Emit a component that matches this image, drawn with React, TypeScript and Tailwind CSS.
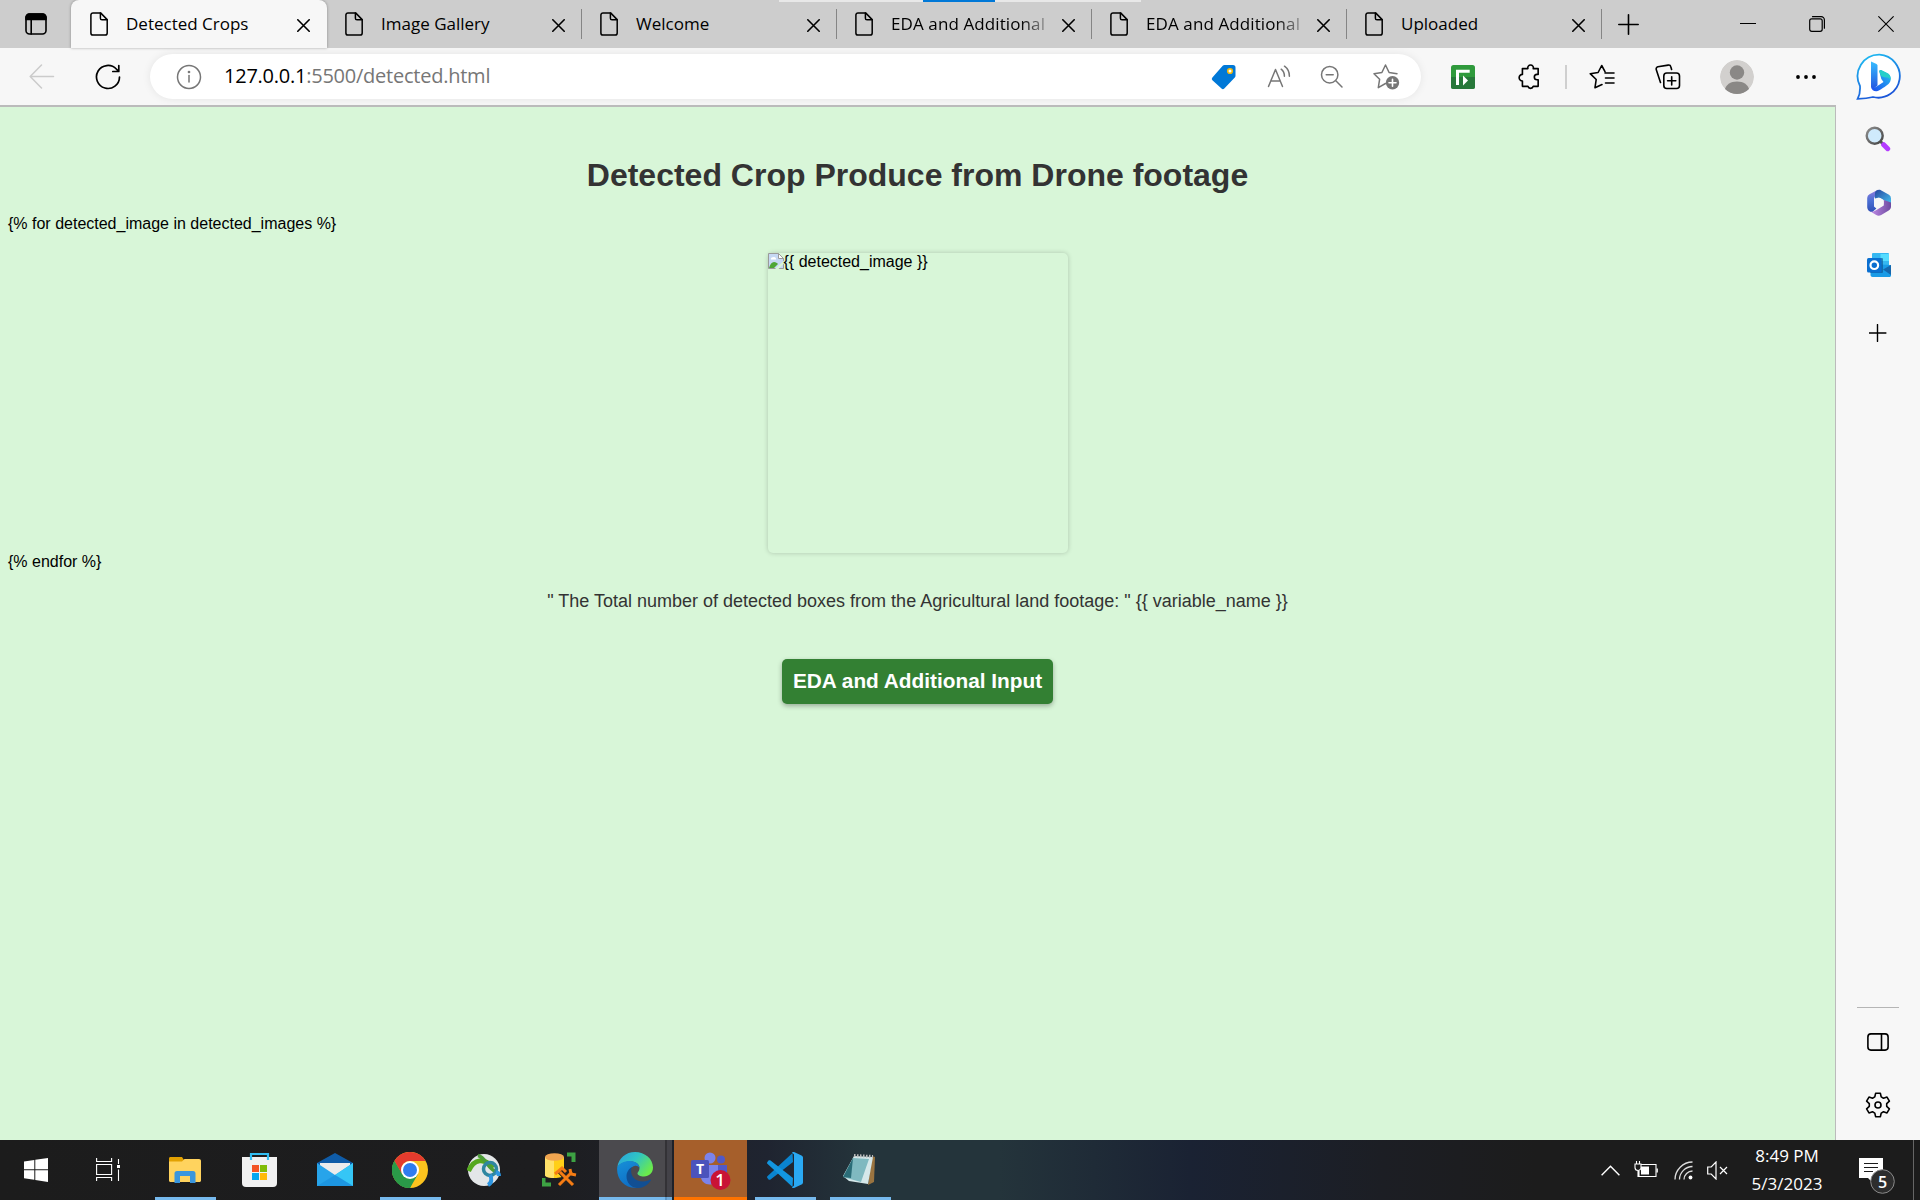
import React from "react";

const TABS = [
  { title: "Detected Crops", active: true },
  { title: "Image Gallery" },
  { title: "Welcome" },
  { title: "EDA and Additional", fade: true },
  { title: "EDA and Additional", fade: true },
  { title: "Uploaded" },
];

const line = { fill: "none", stroke: "currentColor", strokeLinecap: "round", strokeLinejoin: "round" } as const;

const FileIcon = () => (
  <svg className="h-6 w-[18px] shrink-0" viewBox="0 0 18 24" {...line} strokeWidth="1.5">
    <path d="M3 .9h7.6L17.2 7.6V21a2.1 2.1 0 0 1-2.1 2.1H3A2.1 2.1 0 0 1 .9 21V3A2.1 2.1 0 0 1 3 .9Z" />
    <path d="M10.4 1v5.2c0 1 .6 1.6 1.6 1.6h5" />
  </svg>
);
const CloseIcon = () => (
  <svg className="h-[13px] w-[13px] shrink-0" viewBox="0 0 13 13" {...line} strokeWidth="1.6">
    <path d="M.8.8l11.4 11.4M12.2.8.8 12.2" />
  </svg>
);

function Tabs() {
  return (
    <div className="relative flex h-12 bg-[#cdcdcd] text-black">
      <div className="flex w-[71px] items-center justify-center">
        <svg className="h-[22px] w-[22px]" viewBox="0 0 22 22" {...line} strokeWidth="1.6">
          <rect x="1" y="1" width="20" height="20" rx="3.5" />
          <path d="M1 6.5V4.5A3.5 3.5 0 0 1 4.5 1h13A3.5 3.5 0 0 1 21 4.5v2Z" fill="currentColor" />
          <path d="M6.2 6v15" />
        </svg>
      </div>
      {TABS.map((t, i) => (
        <div
          key={i}
          className={
            t.active
              ? "flex h-12 w-[256px] items-center rounded-t-lg bg-[#f7f7f7] pl-[19px] pr-[17px] shadow-[0_0_3px_rgba(0,0,0,0.35)]"
              : "flex h-12 w-[255px] items-center pl-[18px] pr-[15px]"
          }
        >
          <FileIcon />
          <span
            className={
              t.fade
                ? "ml-[18px] whitespace-nowrap text-[17px] tracking-[0.1px] [mask-image:linear-gradient(to_right,black_84%,rgba(0,0,0,0.3))]"
                : "ml-[18px] whitespace-nowrap text-[17px]"
            }
          >
            {t.title}
          </span>
          <span className="ml-auto pt-0.5"><CloseIcon /></span>
          {!t.active && <span className="-mr-[15px] ml-4 h-[30px] w-[1.5px] bg-[#858585]" />}
        </div>
      ))}
      <div className="flex flex-1 items-center pl-4">
        <svg className="h-[21px] w-[21px]" viewBox="0 0 21 21" {...line} strokeWidth="1.6"><path d="M10.5.8v19.4M.8 10.5h19.4" /></svg>
      </div>
      <div className="flex items-center gap-[53px] pr-[26px]">
        <svg className="h-4 w-4" viewBox="0 0 16 16" {...line} strokeWidth="1.2"><path d="M.5 7.500h15" /></svg>
        <svg className="h-4 w-4" viewBox="0 0 16 16" {...line} strokeWidth="1.2">
          <rect x=".7" y="2.8" width="12.5" height="12.5" rx="2" />
          <path d="M3.5.7h8.700a3.200 3.200 0 0 1 3.200 3.200v8.300" />
        </svg>
        <svg className="h-4 w-4" viewBox="0 0 16 16" {...line} strokeWidth="1.1"><path d="M.7.7l14.600 14.600M15.300.7.7 15.300" /></svg>
      </div>
      <div className="absolute left-[779px] top-0 flex h-0.5 w-[362px] bg-[#e8e8e8]">
        <div className="ml-36 h-0.5 w-[72px] bg-[#0078d7]" />
      </div>
    </div>
  );
}

function Toolbar() {
  return (
    <div className="flex h-[57px] items-center bg-[#f7f7f7] text-black">
      <svg className="ml-[29px] h-[26px] w-[26px] text-[#cbcbcb]" viewBox="0 0 26 26" {...line} strokeWidth="1.5">
        <path d="M24.5 12.500H1.500M12.500 1 1.200 12.500l11.300 11.500" />
      </svg>
      <svg className="ml-[40px] h-[26px] w-[26px]" viewBox="0 0 26 26" {...line} strokeWidth="1.7">
        <path d="M24.5 13a11.500 11.500 0 1 1-3.200-8L23.500 7.200M23.800 1.500v6h-6" />
      </svg>
      <div className="ml-[29px] flex h-[45px] w-[1271px] items-center rounded-full bg-white pl-[26px] text-[#767676] shadow-[0_0_8px_rgba(0,0,0,0.08)]">
        <svg className="h-[26px] w-[26px]" viewBox="0 0 26 26" {...line} strokeWidth="1.5">
          <circle cx="13" cy="13" r="11.5" /><path d="M13 11.500V18" /><circle cx="13" cy="8" r=".6" fill="currentColor" />
        </svg>
        <div className="mb-px ml-[22px] text-xl tracking-[-0.24px]"><span className="text-black">127.0.0.1</span>:5500/detected.html</div>
        <svg className="ml-auto h-[26px] w-[26px]" viewBox="0 0 26 26">
          <path d="M13.5 1H22A2.500 2.500 0 0 1 24.500 3.500v8.300c0 .6-.2 1.200-.7 1.700L13.300 24.600a2 2 0 0 1-2.800 0L1.400 16.200a2 2 0 0 1 0-2.800L11.700 1.800c.5-.5 1.100-.8 1.800-.8Z" fill="#0078d7" />
          <circle cx="19" cy="7" r="2.300" fill="#fff" stroke="#f2b90c" strokeWidth="1.6" />
        </svg>
        <svg className="ml-[30px] h-6 w-6" viewBox="0 0 24 24" {...line} strokeWidth="1.5">
          <path d="M1.500 21.500 8.500 4.500l7 17M3.700 16h9.600M14.200 4.200c2 1.600 3.200 4 3.200 7M17.500 1.200c3 2.200 4.900 5.800 4.900 10" />
        </svg>
        <svg className="ml-[29px] h-6 w-6" viewBox="0 0 24 24" {...line} strokeWidth="1.5">
          <circle cx="9.700" cy="9.700" r="8.200" /><path d="M15.800 15.800 22 22M6.200 9.700h7" />
        </svg>
        <svg className="ml-[29px] mr-[21px] h-[26px] w-[27px]" viewBox="0 0 27 26" {...line} strokeWidth="1.5">
          <path d="M12.500 19.500 5.300 23.600l1.300-8.300L1 9.700l7.900-1.200L12.500 1l3.600 7.500L24 9.700" />
          <circle cx="19.500" cy="18.700" r="6.700" fill="currentColor" stroke="none" />
          <path d="M19.500 15.200v7M16 18.700h7" stroke="#fff" strokeWidth="1.6" />
        </svg>
      </div>
      <svg className="ml-[30px] h-6 w-6" viewBox="0 0 24 24">
        <rect width="24" height="24" rx="2.5" fill="#2f9a3c" /><path d="M0 12h24v9.500a2.500 2.500 0 0 1-2.500 2.500h-19A2.500 2.500 0 0 1 0 21.500Z" fill="#27783a" />
        <path d="M6.500 20V6.200h12.200" fill="none" stroke="#fff" strokeWidth="3" /><path d="M12 10.500l5 5-5 5Z" fill="#fff" />
      </svg>
      <svg className="ml-[41px] h-[28px] w-[28px]" viewBox="0 0 24 24" {...line} strokeWidth="1.4">
        <path d="M7 4.800h3.200a2.400 2.400 0 1 1 4.600 0H19v5h-1a2.200 2.200 0 1 0 0 4.600h1V20h-4.200a2.400 2.400 0 0 1-4.600 0H5.500v-4.600a2.600 2.600 0 1 1 0-5.600V4.800Z" />
      </svg>
      <div className="ml-[21px] h-6 w-0.5 bg-[#cfcfcf]" />
      <svg className="ml-[22px] h-[26px] w-[26px]" viewBox="0 0 26 26" {...line} strokeWidth="1.6">
        <path d="M13 20.500l-7 3.200 1.200-8.200L1.200 9.700l7.900-1.200L12.700 1.500l3.300 6.200M16 9h9M16.500 14H25M16.500 19H25" />
      </svg>
      <svg className="ml-[40px] h-[26px] w-[26px]" viewBox="0 0 26 26" {...line} strokeWidth="1.6">
        <rect x="8.800" y="9" width="15.700" height="15.500" rx="3" /><path d="M16.700 12.700v8.200M12.600 16.800h8.200M5.500 18.500 1.300 5.800a2.300 2.300 0 0 1 1.600-3L13.200 1.100c1.200-.2 2.300.4 2.600 1.600l.8 2.800" />
      </svg>
      <svg className="ml-[39px] h-[34px] w-[34px]" viewBox="0 0 34 34">
        <clipPath id="av"><circle cx="17" cy="17" r="17" /></clipPath>
        <g clipPath="url(#av)"><circle cx="17" cy="17" r="17" fill="#d2d0ce" /><circle cx="17" cy="12.500" r="7.200" fill="#8a8886" /><path d="M4.500 31c1-6.500 6-9.500 12.500-9.500S28.500 24.500 29.500 31L17 36Z" fill="#8a8886" /></g>
      </svg>
      <svg className="ml-[42px] h-5 w-5" viewBox="0 0 20 20"><circle cx="2" cy="10" r="1.9" /><circle cx="10" cy="10" r="1.9" /><circle cx="18" cy="10" r="1.9" /></svg>
    </div>
  );
}

function Page() {
  return (
    <main className="flex flex-1 flex-col items-center border-r border-t-2 border-[#bbbbbb] bg-[#d8f6d8] font-['Liberation_Sans',sans-serif] text-base leading-[18px] text-black">
      <h1 className="mt-[50px] text-[32px] font-bold leading-[37px] text-[#333]">Detected Crop Produce from Drone footage</h1>
      <p className="mt-[21px] w-full pl-2">{"{% for detected_image in detected_images %}"}</p>
      <div className="mt-[20px] flex h-[300px] w-[300px] items-start rounded-[5px] shadow-[0_0_5px_rgba(0,0,0,0.2)]">
        <svg className="h-4 w-4" viewBox="0 0 16 16">
          <path d="M.5.5h10L15.500 5.500v10H.5Z" fill="#c6d8f4" stroke="#9a9a9a" />
          <path d="M10.500.5v5h5Z" fill="#fff" stroke="#9a9a9a" />
          <path d="M3 6.500a1.700 1.700 0 0 1 2-2.200 2 2 0 0 1 3 1.200v1Z" fill="#fff" />
          <path d="M1 15c1-4 3-6 5-6s3 1 4 2l-4 4Z" fill="#4ea636" /><path d="M7 16 16 7.500v3L10.500 16Z" fill="#d8f6d8" />
        </svg>
        <span>{"{{ detected_image }}"}</span>
      </div>
      <p className="w-full pl-2">{"{% endfor %}"}</p>
      <p className="mt-[20px] text-lg leading-[21px] text-[#333]">{'" The Total number of detected boxes from the Agricultural land footage: " {{ variable_name }}'}</p>
      <button className="mt-[47px] flex h-[45px] w-[271px] items-center justify-center rounded-[5px] bg-[#338033] pb-px text-[20.8px] font-bold text-white shadow-[0_2px_5px_rgba(0,0,0,0.3)]">
        EDA and Additional Input
      </button>
    </main>
  );
}

function Bing() {
  return (
    <svg className="ml-0.5 mt-[5px] h-[48px] w-[46px]" viewBox="0 0 46 48">
      <defs>
        <linearGradient id="bo" x1="0" y1="0" x2=".4" y2="1"><stop stopColor="#1fc3f3" /><stop offset="1" stopColor="#1b57d9" /></linearGradient>
        <linearGradient id="b1" x1="0" y1="0" x2="0" y2="1"><stop stopColor="#37bdff" /><stop offset="1" stopColor="#2355e0" /></linearGradient>
        <linearGradient id="b2" x1="1" y1="0" x2="0" y2="1"><stop stopColor="#26c6f0" /><stop offset="1" stopColor="#1b48ef" /></linearGradient>
      </defs>
      <path d="M23.500 1.700A21.500 21.500 0 1 1 17 44c-4.500 1.200-9.500 1.700-15.300 1.800C3.800 42 4.300 38 4 33A21.500 21.500 0 0 1 23.500 1.700Z" fill="#fff" stroke="url(#bo)" strokeWidth="1.800" />
      <path d="M15 8.500l5.500 2.500c.6.3 1 .9 1 1.600V32.500l-4 3.300c-1.500 0-2.500-1-2.500-2.500Z" fill="url(#b1)" />
      <path d="M25 17l7 3.500c3.300 2 3.800 7.500.5 10.500-2 1.800-9 6.700-12 7.300-2.500.2-5-1.500-5.500-4.300 2 1.500 4.500 0 6-.8l6.500-4.200-2.200-3-2-7.400c-.2-1 .7-2 1.700-1.600Z" fill="url(#b2)" />
      <path d="M25 17l7 3.500c2 1.300 3 3.700 2.600 6.300-1.500-2-3.500-2.700-6.600-2.500l-3-1.300-1.700-4.400c-.2-1 .7-2 1.700-1.600Z" fill="#25cfc9" />
    </svg>
  );
}

function Sidebar() {
  return (
    <aside className="flex w-[84px] flex-col items-center bg-[#f7f7f7] text-black">
      <Bing />
      <svg className="mt-[25px] h-[26px] w-[26px]" viewBox="0 0 26 26">
        <defs><linearGradient id="ms" x1="0" y1="0" x2="1" y2="1"><stop stopColor="#8e8e8e" /><stop offset="1" stopColor="#444" /></linearGradient></defs>
        <path d="M15.500 15.500l3.500 3.500" stroke="#555" strokeWidth="3" /><path d="M18.700 18.700l4 4" stroke="#b43cff" strokeWidth="5" strokeLinecap="round" />
        <circle cx="9.700" cy="9.700" r="8" fill="#cfeafc" stroke="url(#ms)" strokeWidth="2.400" />
      </svg>
      <svg className="ml-0.5 mt-[37px] h-[27px] w-[26px]" viewBox="0 0 26 27">
        <defs>
          <linearGradient id="o1" x1="0" y1="0" x2="0" y2="1"><stop stopColor="#8f7bdc" /><stop offset=".5" stopColor="#4a6fd4" /><stop offset="1" stopColor="#2f4fb5" /></linearGradient>
          <linearGradient id="o2" x1="0" y1="0" x2="1" y2="1"><stop stopColor="#27459f" /><stop offset="1" stopColor="#45c5f2" /></linearGradient>
          <linearGradient id="o3" x1="0" y1="0" x2="1" y2="0"><stop stopColor="#c08be6" /><stop offset="1" stopColor="#6d4aa0" /></linearGradient>
        </defs>
        <path d="M8 9.500 12 .8 3.500 5.200A4.500 4.500 0 0 0 1.200 9v9c0 3 2.500 5 5.200 5l4-3.500L8 17.500Z" fill="url(#o1)" />
        <path d="M9 9.500V4C9 2 11.500.3 14 .8l9 5A4.500 4.500 0 0 1 25 9.500v6L17.500 11 13 8.500Z" fill="url(#o2)" />
        <path d="M25 13.500v4c0 1.700-.8 3-2.300 4l-7.500 4.500c-1.700 1-3.500 1-5 0L4.500 22.500c3 .5 4.500-.5 6-1.500l7.300-4.500V11Z" fill="url(#o3)" />
        <circle cx="13" cy="13.500" r="4.600" fill="#f7f7f7" />
      </svg>
      <svg className="ml-0.5 mt-[37px] h-6 w-6" viewBox="0 0 24 24">
        <rect x="5" width="17" height="14" rx="1" fill="#35b7f1" /><rect x="13.500" y="1" width="8.500" height="7" fill="#55dcff" />
        <path d="M3.500 11 24 12v10.500c0 .8-.7 1.500-1.500 1.500h-17c-1 0-2-.8-2-2Z" fill="#1a9be6" /><path d="M24 12v10l-8-5.500Z" fill="#1567ad" />
        <rect x="3" y="5" width="13" height="15" rx="1" fill="#0c4b86" opacity=".6" /><rect y="5" width="14.500" height="14.500" rx="1.500" fill="#0a6fd0" />
        <circle cx="7.300" cy="12.200" r="3.800" fill="none" stroke="#fff" strokeWidth="2.200" />
      </svg>
      <svg className="mt-[47px] h-[18px] w-[18px]" viewBox="0 0 18 18" {...line} strokeWidth="1.4"><path d="M8.500 .6v16.800M.1 9h16.800" /></svg>
      <div className="mt-auto h-px w-[42px] bg-[#b5b5b5]" />
      <svg className="mt-[25px] h-[18px] w-[22px]" viewBox="0 0 22 18" {...line} strokeWidth="1.6"><rect x=".9" y=".9" width="20.200" height="16.200" rx="3" /><path d="M14.500 1v16" /></svg>
      <svg className="mb-[22px] mt-[41px] h-[26px] w-[26px]" viewBox="0 0 26 26" {...line} strokeWidth="1.6">
        <path d="M10.600 1.300h4.800l.8 3.600 2.300 1.300 3.500-1.100 2.400 4.100-2.700 2.500v2.600l2.700 2.500-2.400 4.100-3.500-1.100-2.300 1.300-.8 3.600h-4.800l-.8-3.600-2.300-1.300L4 20.900l-2.400-4.100 2.700-2.500v-2.600L1.600 9.200 4 5.100l3.500 1.100 2.300-1.300Z" /><circle cx="13" cy="13" r="3" />
      </svg>
    </aside>
  );
}

const S = ({ children, vb = "0 0 36 36" }: { children: React.ReactNode; vb?: string }) => <svg className="-ml-px h-9 w-9" viewBox={vb}>{children}</svg>;

const APPS: { name: string; cell: string; bar?: string; icon: React.ReactNode }[] = [
  { name: "files", cell: "", bar: "w-[61px] bg-[#76b9ed]", icon: <S><path d="M2 6.500C2 5.500 2.700 5 3.500 5H15l2 3h15c1 0 2 .7 2 2v3H2Z" fill="#e2a102" /><path d="M2 9.500h13L17.500 7H32c1.200 0 2 .8 2 2v19.500c0 .8-.7 1.500-1.500 1.500h-29c-.8 0-1.500-.7-1.500-1.500Z" fill="#ffd35e" /><path d="M7.500 31V21.500A2.500 2.500 0 0 1 10 19h16a2.500 2.500 0 0 1 2.500 2.500V31H23v-7H13v7Z" fill="#3a96dd" /></S> },
  { name: "store", cell: "", icon: <S vb="1 0 36 36"><path d="M1 5h35v26a4 4 0 0 1-4 4H5a4 4 0 0 1-4-4Z" fill="#f1f1f1" /><path d="M10 8V2h17v6" fill="none" stroke="#30bdf2" strokeWidth="2.200" /><path d="M11 13h7v7h-7Z" fill="#f35325" /><path d="M19 13h7v7h-7Z" fill="#81bc06" /><path d="M11 21h7v7h-7Z" fill="#05a6f0" /><path d="M19 21h7v7h-7Z" fill="#ffba08" /></S> },
  { name: "mail", cell: "", icon: <S><path d="M0 11 18 1l18 10v8H0Z" fill="#0f5ca8" /><path d="M3 11h30v8L18 25 3 18Z" fill="#ececec" /><path d="M0 11l18 12 18-12v23H0Z" fill="#27a4ea" /><path d="M18 23 36 11v23Z" fill="#35c6f6" /><path d="M18 23l18 11H0Z" fill="#198fdc" opacity=".65" /></S> },
  { name: "chrome", cell: "", bar: "w-[61px] bg-[#76b9ed]", icon: <S><circle cx="18" cy="18" r="18" fill="#fcc31e" /><path d="M2.400 9A18 18 0 0 0 18 36l7.800-13.500L18 18l-7.800 4.500Z" fill="#2a9a48" /><path d="M2.400 9A18 18 0 0 1 33.600 9H18a9 9 0 0 0-7.800 4.500v9Z" fill="#e33b2e" /><path d="M2.400 9l7.800 13.500c1.500 3 5 4.800 8 4.500L22 26l-4 10A18 18 0 0 1 2.400 9Z" fill="#2a9a48" /><circle cx="18" cy="18" r="9" fill="#fff" /><circle cx="18" cy="18" r="7" fill="#2f7cf0" /></S> },
  { name: "dialer", cell: "", icon: <S vb="1 0 36 36"><circle cx="18" cy="18" r="16" fill="#e3e6e8" /><g fill="none"><path d="M2.500 19C8 7 18 5 27 16" stroke="#55a81f" strokeWidth="5" /><path d="M12 3.500c8 2 9 13 19 17" stroke="#4d9c38" strokeWidth="3.500" /><circle cx="24" cy="17" r="6.500" stroke="#2f86a0" strokeWidth="3.500" /><path d="M22 33c4-2 4-7 2-10M30 20c3 1 3 3 3 4" stroke="#2b94df" strokeWidth="4" /></g></S> },
  { name: "database", cell: "", icon: <S vb="1 0 36 36"><path d="M26 2.500h6.500V10M2.500 26v6.500H10" fill="none" stroke="#3da243" strokeWidth="4" /><path d="M4 5v18c0 4 19 4 19 0V5Z" fill="#ffcf17" /><path d="M4 5v18c0 2 4 3 9 3V5Z" fill="#ffe169" /><ellipse cx="13.500" cy="5" rx="9.500" ry="3.800" fill="#f0a550" /><path d="M19 33l13-14M19 19l13 14" stroke="#26201c" strokeWidth="6" /><path d="M18 33l13-13m-2-3 1 5 5 1M19 20l13 13M14 22l7-6 4 4" fill="none" stroke="#f57c14" strokeWidth="3" /></S> },
  { name: "edge", cell: "bg-[linear-gradient(90deg,#4b4a4e_66px,#333236_66px,#333236_68px,#434248_68px)]", bar: "w-[73px] bg-[linear-gradient(90deg,#76b9ed_66px,#5a93c2_66px,#5a93c2_68px,#6ea9d8_68px)]", icon: <S><defs><linearGradient id="e1" x1="0" y1="0" x2="1" y2=".6"><stop stopColor="#2a9fe0" /><stop offset=".5" stopColor="#2fc5c4" /><stop offset="1" stopColor="#6bea4b" /></linearGradient><linearGradient id="e2" x1="0" y1="0" x2=".4" y2="1"><stop stopColor="#1690d8" /><stop offset="1" stopColor="#0f6fc5" /></linearGradient></defs><path d="M.3 15.500C1.500 6 9 0 18 0c10 0 18 7 18 15.500 0 5.500-4 9-9 9-4 0-6.500-1.500-6.500-3s2-2.300 2-5.500c0-4-4-6.500-9-6.500C7 9.500 2 12 .3 15.500Z" fill="url(#e1)" /><path d="M.2 15.500C2 11.500 7 9 12.500 9c6 0 10 3 10 7-1-1.500-3-2.500-5-2-3 .5-6 4-6 9 0 7 5 12 11 12.300-12.500 3-23.500-7-22.300-19.800Z" fill="url(#e2)" /><path d="M15 15c-2.500 5 0 14.500 11 14.500 3.500 0 5.500-1.200 7-2 .7-.3 1.200.3.8 1-4 6-9.300 7.800-13.800 7.500-6.500-.5-10.500-6-10.500-11.500 0-4.500 2.500-8 5.500-9.500Z" fill="#114f93" /></S> },
  { name: "teams", cell: "bg-[#a65f2b]", bar: "w-[73px] bg-[#ff7300]", icon: <svg className="h-[38px] w-10 overflow-visible" viewBox="0 0 40 38"><circle cx="19" cy="7" r="5.500" fill="#7b83eb" /><circle cx="30" cy="8.500" r="4" fill="#5059c9" /><path d="M24 14h12v10c0 4-3 6-7 6h-5Z" fill="#5059c9" /><path d="M10 14h17v12c0 5-4 7.500-8.500 7.500S10 30 10 26Z" fill="#7b83eb" /><rect y="9" width="18" height="18" rx="1.500" fill="#4b53bc" /><text x="9" y="23" textAnchor="middle" fontFamily="Open Sans" fontWeight="700" fontSize="14" fill="#fff">T</text><circle cx="29.500" cy="29" r="10" fill="#c91335" /><text x="29" y="35" textAnchor="middle" fontFamily="Open Sans" fontWeight="600" fontSize="17" fill="#fff">1</text></svg> },
  { name: "code", cell: "", bar: "w-[61px] bg-[#76b9ed]", icon: <S><path d="M26 10 3.500 27.500c-.7.5-1.400.4-2 0L.4 26c-.5-.6-.5-1.200 0-1.800L25.500 1Z" fill="#0a84cf" /><path d="M26 26 3.500 8.500c-.7-.5-1.400-.4-2 0L.4 10c-.5.6-.5 1.200 0 1.800L25.500 35Z" fill="#1296e0" /><path d="M27 0l7.500 3.500c1 .5 1.500 1.200 1.500 2.300v24.400c0 1.100-.5 1.800-1.500 2.300L27 36c-.8.2-1.500 0-2-.6l2-1.900V2.500L25 .6c.5-.6 1.200-.8 2-.6Z" fill="#2aa9f3" /></S> },
  { name: "notes", cell: "", bar: "w-[61px] bg-[#76b9ed]", icon: <S vb="1 0 36 36"><path d="M31 4l3 1-1 25-6 3Z" fill="#9a7440" /><path d="M13 4 32 5 27 32 8 29 2 24Z" fill="#d5e8ea" /><path d="M12 6 28 7 20 30 2 25Z" fill="#7fb9c0" /><path d="M12 6l-10 19 8 1Z" fill="#2b6d78" /><path d="M13 3.500l19 1" stroke="#bbb" strokeWidth="3" strokeDasharray="1.5 1.5" /></S> },
];

function Taskbar() {
  return (
    <footer className="flex h-[60px] bg-[linear-gradient(90deg,#1c1c1c_0%,#1d1d1f_28%,#1f2430_40%,#24343b_45%,#24343b_52%,#1a2233_62%,#1c1e24_72%,#1c1c1c_80%)] text-white">
      <div className="flex w-[72px] items-center justify-center">
        <svg className="h-6 w-6" viewBox="0 0 24 24" fill="#fff"><path d="M0 3.400 10.300 2v9.300H0ZM11.300 1.800 24 0v11.300H11.300ZM0 12.300h10.300v9.400L0 20.300ZM11.300 12.300H24V24l-12.700-1.900Z" /></svg>
      </div>
      <div className="flex w-[76px] items-center pl-6">
        <svg className="h-6 w-6" viewBox="0 0 24 24" fill="none" stroke="#fff" strokeWidth="1.1"><path d="M.6 0v3.500h15V0M.6 23v-3.500h15V23M.6 6.500h15V16.500H.6ZM22.500 1v5M22.500 11.500v11.500" /><path d="M21 7h3v3h-3Z" fill="#fff" stroke="none" /></svg>
      </div>
      {APPS.map((a) => (
        <div key={a.name} className="flex w-[75px] justify-center">
          <div className={`flex w-[73px] flex-col items-center ${a.cell}`}>
            <div className="flex flex-1 items-center pt-[3px]">{a.icon}</div>
            <div className={`h-[3px] ${a.bar ?? ""}`} />
          </div>
        </div>
      ))}
      <div className="ml-auto flex items-center">
        <svg className="h-[11px] w-[19px]" viewBox="0 0 19 11" fill="none" stroke="#fff" strokeWidth="1.4"><path d="M.6 10.200 9.500 1.200l8.900 9" /></svg>
        <svg className="ml-[14px] h-[18px] w-6" viewBox="0 0 24 18" fill="none" stroke="#fff" strokeWidth="1.1"><path d="M7.500 3.500H22v12H5V10M1 3h6V6.500a3 3 0 0 1-6 0ZM2.500 3V0M5.500 3V0M4 9.500v6h2M23.300 7.500v4" /><path d="M7 5.500h8v8H7Z" fill="#fff" stroke="none" /></svg>
        <svg className="ml-4 h-[19px] w-[19px]" viewBox="0 0 19 19" fill="none" stroke="#fff" strokeWidth="1.3"><path d="M1 18.500C1 9 9 1 18.500 1M5.500 18.500c0-7 6-13 13-13M10 18.500c0-4.500 4-8.500 8.500-8.500" opacity=".85" /><circle cx="16.500" cy="16.500" r="1.900" fill="#fff" stroke="none" /></svg>
        <svg className="ml-[14px] h-[19px] w-[21px]" viewBox="0 0 21 19" fill="none" stroke="#fff" strokeWidth="1.2"><path d="M.7 6h3.500L9 1v17l-4.800-5H.7ZM13 6l7 7M20 6l-7 7" /></svg>
        <div className="ml-[19px] w-[80px] text-center text-[17px] leading-[28px]"><div>8:49 PM</div><div>5/3/2023</div></div>
        <svg className="ml-[32px] mt-[10px] h-9 w-9 overflow-visible" viewBox="0 0 36 36"><path d="M0 1h24v20H14v5l-5-5H0Z" fill="#fff" /><path d="M5 6.500h14M5 10.500h14M5 14.500h9" stroke="#1c1c1c" strokeWidth="1.2" /><circle cx="23.500" cy="24.500" r="11.800" fill="#2d2d2d" stroke="#8a8a8a" /><text x="23.500" y="30.500" textAnchor="middle" fontFamily="Open Sans" fontWeight="600" fontSize="16" fill="#fff">5</text></svg>
        <div className="ml-[18px] mr-[6px] h-[60px] w-px bg-[#666]" />
      </div>
    </footer>
  );
}

export default function App() {
  return (
    <div className="flex h-[1200px] w-[1920px] flex-col overflow-hidden font-['Open_Sans',sans-serif]">
      <Tabs />
      <div className="flex min-h-0 flex-1">
        <div className="flex w-[1836px] flex-col">
          <Toolbar />
          <Page />
        </div>
        <Sidebar />
      </div>
      <Taskbar />
    </div>
  );
}
